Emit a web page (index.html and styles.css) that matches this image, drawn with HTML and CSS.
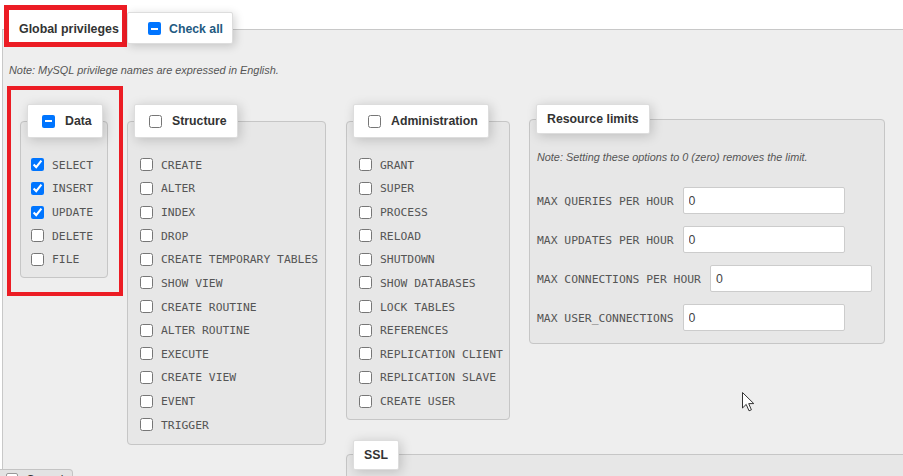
FILE: index.html
```html
<!DOCTYPE html>
<html lang="en">
<head>
<meta charset="utf-8">
<title>Global privileges</title>
<link rel="stylesheet" href="styles.css">
</head>
<body>
<div class="tabs">
  <div class="highlight-tab"><span class="tab-title">Global privileges</span></div>
  <label class="tab check-all"><span class="cb-mixed"></span>Check all</label>
</div>
<div class="outer">
  <p class="note">Note: MySQL privilege names are expressed in English.</p>
  <div class="groups">
    <div class="highlight-box">
      <fieldset class="group group-data">
        <legend><span class="legend-inner with-cb"><span class="cb-mixed legend-cb"></span>Data</span></legend>
        <ul class="privs">
          <li><input type="checkbox" checked><span>SELECT</span></li>
          <li><input type="checkbox" checked><span>INSERT</span></li>
          <li><input type="checkbox" checked><span>UPDATE</span></li>
          <li><input type="checkbox"><span>DELETE</span></li>
          <li><input type="checkbox"><span>FILE</span></li>
        </ul>
      </fieldset>
    </div>

    <fieldset class="group group-structure">
      <legend><span class="legend-inner with-cb"><input type="checkbox" class="legend-cb">Structure</span></legend>
      <ul class="privs">
        <li><input type="checkbox"><span>CREATE</span></li>
        <li><input type="checkbox"><span>ALTER</span></li>
        <li><input type="checkbox"><span>INDEX</span></li>
        <li><input type="checkbox"><span>DROP</span></li>
        <li><input type="checkbox"><span>CREATE TEMPORARY TABLES</span></li>
        <li><input type="checkbox"><span>SHOW VIEW</span></li>
        <li><input type="checkbox"><span>CREATE ROUTINE</span></li>
        <li><input type="checkbox"><span>ALTER ROUTINE</span></li>
        <li><input type="checkbox"><span>EXECUTE</span></li>
        <li><input type="checkbox"><span>CREATE VIEW</span></li>
        <li><input type="checkbox"><span>EVENT</span></li>
        <li><input type="checkbox"><span>TRIGGER</span></li>
      </ul>
    </fieldset>

    <div class="right-group">
      <div class="right-row">
        <fieldset class="group group-admin">
          <legend><span class="legend-inner with-cb"><input type="checkbox" class="legend-cb">Administration</span></legend>
          <ul class="privs">
            <li><input type="checkbox"><span>GRANT</span></li>
            <li><input type="checkbox"><span>SUPER</span></li>
            <li><input type="checkbox"><span>PROCESS</span></li>
            <li><input type="checkbox"><span>RELOAD</span></li>
            <li><input type="checkbox"><span>SHUTDOWN</span></li>
            <li><input type="checkbox"><span>SHOW DATABASES</span></li>
            <li><input type="checkbox"><span>LOCK TABLES</span></li>
            <li><input type="checkbox"><span>REFERENCES</span></li>
            <li><input type="checkbox"><span>REPLICATION CLIENT</span></li>
            <li><input type="checkbox"><span>REPLICATION SLAVE</span></li>
            <li><input type="checkbox"><span>CREATE USER</span></li>
          </ul>
        </fieldset>

        <fieldset class="group group-limits">
          <legend><span class="legend-inner">Resource limits</span></legend>
          <p class="limits-note">Note: Setting these options to 0 (zero) removes the limit.</p>
          <div class="limit"><label for="mqh">MAX QUERIES PER HOUR</label><input id="mqh" type="text" value="0"></div>
          <div class="limit"><label for="muh">MAX UPDATES PER HOUR</label><input id="muh" type="text" value="0"></div>
          <div class="limit"><label for="mch">MAX CONNECTIONS PER HOUR</label><input id="mch" type="text" value="0"></div>
          <div class="limit"><label for="muc">MAX USER_CONNECTIONS</label><input id="muc" type="text" value="0"></div>
        </fieldset>
      </div>

      <fieldset class="group group-ssl">
        <legend><span class="legend-inner">SSL</span></legend>
      </fieldset>
    </div>
  </div>
</div>

<div class="console-bar"><span class="console-icon"></span>Console</div>

<svg class="cursor" width="15" height="22" viewBox="0 0 15 22" aria-hidden="true">
  <path d="M1.5 1.5 L1.5 17 L5.2 13.4 L8 19.8 L10.4 18.8 L7.7 12.6 L12.8 12.6 Z" fill="#fff" stroke="#333" stroke-width="1" stroke-linejoin="round"/>
</svg>
</body>
</html>
```

FILE: styles.css
```css
* {
  box-sizing: border-box;
}

html,
body {
  margin: 0;
  height: 100%;
}

body {
  font-family: "Liberation Sans", Arial, sans-serif;
  font-size: 13px;
  color: #333;
  background: #fff;
  overflow: hidden;
}

/* top tab row */
.tabs {
  display: flex;
  align-items: flex-start;
  height: 29px;
  padding: 5px 0 0 4px;
  position: relative;
  z-index: 1;
}

.highlight-tab {
  width: 123px;
  height: 42px;
  border: 5px solid #ec1c24;
  background: #fff;
  display: flex;
  align-items: center;
  padding: 6px 0 0 10px;
}

.tab-title {
  font-weight: bold;
  font-size: 12.4px;
  color: #333;
}

.check-all {
  margin-top: 7px;
  width: 106px;
  height: 32px;
  display: flex;
  align-items: center;
  padding: 1px 0 0 20px;
  background: #fff;
  border: 1px solid #ddd;
  border-radius: 2px;
  box-shadow: 2px 2px 10px rgba(0, 0, 0, 0.18);
  font-weight: bold;
  font-size: 12.3px;
  color: #235a81;
}

.cb-mixed {
  display: inline-block;
  flex: none;
  width: 13px;
  height: 13px;
  border-radius: 2px;
  background: #0075ff;
  position: relative;
  margin-right: 8px;
}

.cb-mixed::after {
  content: "";
  position: absolute;
  left: 3px;
  right: 3px;
  top: 5.5px;
  height: 2px;
  background: #fff;
}

/* outer area */
.outer {
  margin-left: 2px;
  border-left: 1px solid #c8c8c8;
  border-top: 1px solid #c8c8c8;
  background: #eee;
  height: calc(100% - 29px);
  padding-top: 33px;
}

.note {
  margin: 0;
  padding-left: 6px;
  font-size: 10.9px;
  line-height: 14px;
  font-style: italic;
  color: #555;
}

.groups {
  display: flex;
  align-items: flex-start;
  margin-top: 9px;
}

.highlight-box {
  flex: none;
  margin-left: 4px;
  border: 4px solid #ec1c24;
  padding: 14px 11px 14px 9px;
}

/* fieldsets */
.group {
  margin: 0;
  min-width: 0;
  border: 1px solid #c6c6c6;
  border-radius: 4px;
  background: #e7e7e7;
  padding: 15px 6px 7px 6px;
  flex: none;
}

.group legend {
  padding: 0 10px;
  background: #fff;
  border: 1px solid #ddd;
  border-radius: 2px;
  box-shadow: 2px 2px 12px rgba(0, 0, 0, 0.18);
  font-weight: bold;
  font-size: 12.3px;
  color: #333;
}

.legend-inner {
  display: flex;
  align-items: center;
  height: 28px;
  line-height: 14px;
}

.legend-inner.with-cb {
  height: 32px;
}

.legend-cb {
  margin: 0 10px 0 4px;
}

input.legend-cb {
  width: 13px;
  height: 13px;
}

.group-data {
  width: 88px;
  padding-bottom: 6px;
}

.group-structure {
  width: 199px;
  margin-left: 4px;
  margin-top: 18px;
}

.right-group {
  flex: none;
  margin-left: 20px;
  margin-top: 18px;
  display: flex;
  flex-direction: column;
  align-items: flex-start;
}

.right-row {
  display: flex;
  align-items: flex-start;
}

.group-admin {
  width: 164px;
  padding-bottom: 6px;
}

.group-limits {
  width: 356px;
  margin-left: 19px;
  padding-top: 13px;
  padding-bottom: 0;
}

.group-ssl {
  width: 700px;
  height: 120px;
  margin-top: 20px;
}

/* privilege lists */
.privs {
  list-style: none;
  margin: 0;
  padding: 0;
}

.privs li {
  height: 23.64px;
  display: flex;
  align-items: center;
  padding-left: 6px;
}

.group-data .privs li {
  padding-left: 4px;
}

.privs input {
  margin: 0;
  width: 13px;
  height: 13px;
  flex: none;
}

.privs span {
  margin-left: 8px;
  font-family: "DejaVu Sans Mono", "Liberation Mono", monospace;
  font-size: 11.35px;
  color: #555;
  white-space: nowrap;
}

/* resource limits */
.limits-note {
  margin: 0 0 20px 1px;
  font-size: 10.85px;
  line-height: 20px;
  font-style: italic;
  color: #555;
}

.limit {
  display: flex;
  align-items: center;
  height: 27px;
  margin-bottom: 12px;
  padding-left: 1px;
}

.limit label {
  font-family: "DejaVu Sans Mono", "Liberation Mono", monospace;
  font-size: 11.35px;
  color: #555;
  margin-right: 9px;
  white-space: nowrap;
}

.limit input {
  width: 162px;
  height: 27px;
  margin: 0;
  padding: 0 5px;
  border: 1px solid #ccc;
  border-radius: 2px;
  background: #fff;
  font-family: "Liberation Sans", Arial, sans-serif;
  font-size: 12.3px;
  color: #444;
}

/* bottom console tab (overlay) */
.console-bar {
  position: fixed;
  left: 0;
  top: 469px;
  width: 73px;
  height: 28px;
  background: #e3e3e3;
  border: 1px solid #c4c4c4;
  border-left: none;
  border-radius: 0 4px 0 0;
  padding: 3px 0 0 6px;
  display: flex;
  align-items: flex-start;
  font-size: 12px;
  color: #333;
}

.console-icon {
  width: 12px;
  height: 12px;
  background: #fff;
  border: 1px solid #999;
  border-radius: 2px;
  margin-right: 8px;
}

/* mouse pointer captured in the screenshot */
.cursor {
  position: fixed;
  left: 741px;
  top: 391px;
}
```
